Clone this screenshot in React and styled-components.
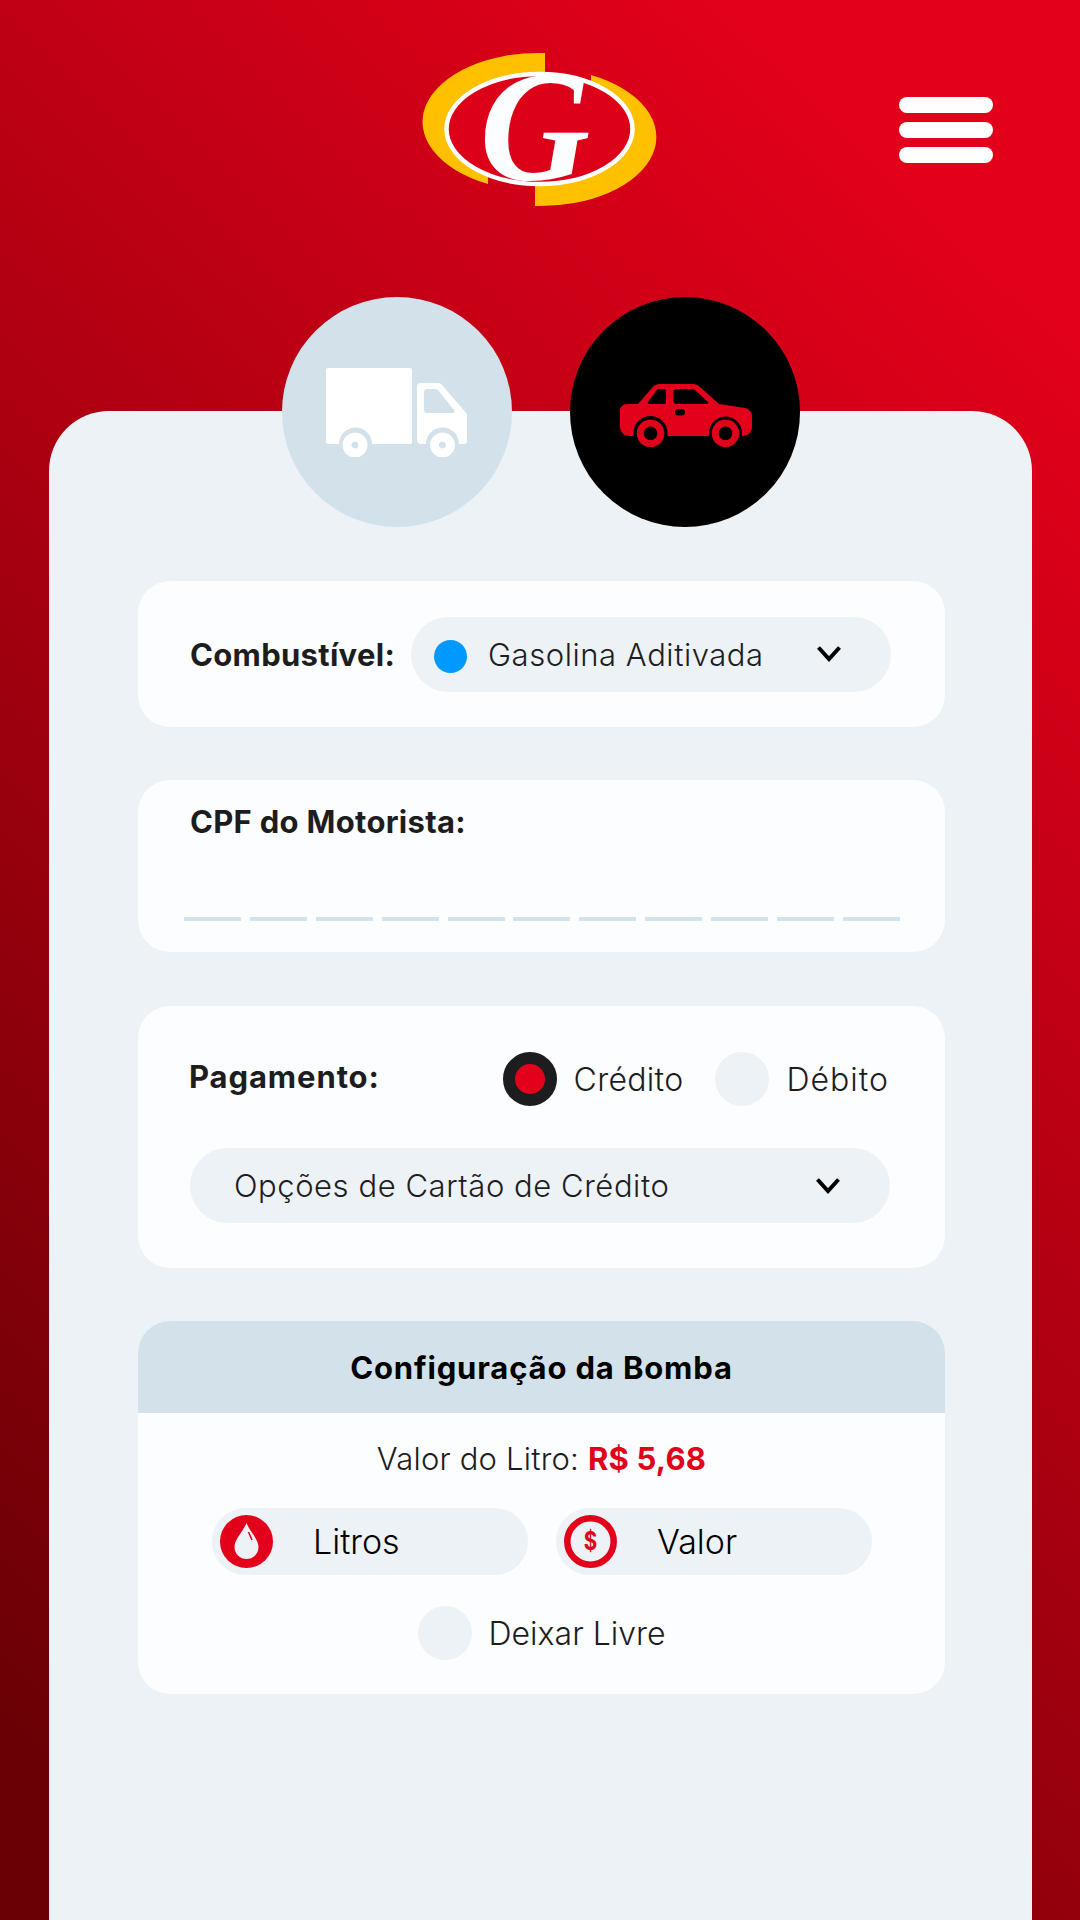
import React from "react";
import styled, { createGlobalStyle } from "styled-components";

const Global = createGlobalStyle`
  html, body { margin: 0; padding: 0; }
  body { font-family: Inter, "Open Sans", "Liberation Sans", sans-serif; }
`;

const Page = styled.div`
  width: 1080px;
  height: 1920px;
  overflow: hidden;
  display: flex;
  flex-direction: column;
  background: linear-gradient(44deg, #6a0005 7%, #e2001a 88%);
`;

const Header = styled.header`
  height: 411px;
  flex: none;
  display: grid;
  grid-template-columns: 1fr auto 1fr;
  align-items: start;
`;

const Logo = styled.svg`
  grid-column: 2;
  width: 232px;
  height: 153px;
  margin-top: 53px;
  display: block;
  overflow: visible;
`;

const Menu = styled.div`
  grid-column: 3;
  justify-self: end;
  margin: 97px 87px 0 0;
  display: flex;
  flex-direction: column;
  gap: 9px;
`;

const MenuBar = styled.span`
  display: block;
  width: 94px;
  height: 16px;
  border-radius: 8px;
  background: #ffffff;
`;

const Panel = styled.main`
  flex: 1;
  margin: 0 48px 0 49px;
  padding: 0 87px 0 89px;
  background: #ecf2f5;
  border-radius: 60px 60px 0 0;
`;

const Tabs = styled.div`
  margin: -114px 0 0 -1px;
  display: flex;
  justify-content: center;
  gap: 58px;
`;

const Tab = styled.div`
  width: 230px;
  height: 230px;
  border-radius: 50%;
  background: ${(p) => (p.$active ? "#000000" : "#d3e2ea")};
  display: flex;
  align-items: center;
  justify-content: center;
`;

const Stack = styled.div`
  margin-top: 54px;
  display: flex;
  flex-direction: column;
  gap: 53px;
`;

const Card = styled.section`
  background: #fbfdfe;
  border-radius: 32px;
  height: ${(p) => p.$h}px;
  box-sizing: border-box;
  overflow: hidden;
`;

const FuelRow = styled.div`
  height: 100%;
  display: flex;
  align-items: center;
  padding: 0 54px 0 52px;
  justify-content: space-between;
`;

const Label = styled.span`
  font-size: 31px;
  font-weight: 700;
  color: #1d1d1f;
  letter-spacing: 0.3px;
`;

const Select = styled.div`
  height: 75px;
  border-radius: 38px;
  background: #ecf2f5;
  display: flex;
  align-items: center;
  box-sizing: border-box;
  width: ${(p) => p.$w}px;
  padding: 0 49px 0 ${(p) => p.$pl}px;
`;

const Dot = styled.span`
  width: 33px;
  height: 33px;
  border-radius: 50%;
  background: #0099ff;
  flex: none;
  margin: 4px 21px 0 0;
`;

const SelectText = styled.span`
  flex: 1;
  font-size: 31px;
  font-weight: 300;
  color: #1d1d1f;
  letter-spacing: 0.55px;
`;

const CpfCard = styled(Card)`
  padding: 23px 45px 0 46px;
  margin-bottom: 1px;
`;

const CpfLabel = styled(Label)`
  display: block;
  padding-left: 6px;
`;

const Dashes = styled.div`
  margin-top: 77px;
  display: flex;
  justify-content: space-between;
`;

const Dash = styled.span`
  width: 57px;
  height: 4px;
  background: #d0e3ee;
`;

const PayRow = styled.div`
  display: flex;
  align-items: center;
  padding: 46px 56px 0 51px;
`;

const PayLabel = styled(Label)`
  flex: 1;
  letter-spacing: 0.9px;
  margin-bottom: 6px;
`;

const Radio = styled.span`
  width: 54px;
  height: 54px;
  border-radius: 50%;
  flex: none;
  box-sizing: border-box;
  background: ${(p) => (p.$on ? "#e2001a" : "#ecf2f5")};
  border: ${(p) => (p.$on ? "12px solid #1d1d1f" : "none")};
`;

const RadioText = styled.span`
  margin-left: 17px;
  margin-right: ${(p) => p.$mr || 0}px;
  font-size: 32px;
  font-weight: 300;
  color: #1d1d1f;
  letter-spacing: 0.3px;
`;

const DebitText = styled(RadioText)`
  letter-spacing: 1px;
`;

const FreeText = styled(RadioText)`
  letter-spacing: 0;
`;

const PaySelect = styled(Select)`
  margin: 42px 0 0 52px;
`;

const BombaHead = styled.h2`
  margin: 0;
  height: 92px;
  background: #d3e2ea;
  display: flex;
  align-items: center;
  justify-content: center;
  font-size: 31px;
  font-weight: 700;
  letter-spacing: 0.85px;
  color: #000;
`;

const Price = styled.p`
  margin: 25px 0 0;
  text-align: center;
  font-size: 31px;
  line-height: 42px;
  font-weight: 300;
  letter-spacing: 0.2px;
  color: #1d1d1f;
  b { color: #e2001a; font-weight: 700; }
`;

const Pills = styled.div`
  margin-top: 28px;
  padding: 0 73px 0 74px;
  display: flex;
  justify-content: space-between;
`;

const Pill = styled.div`
  width: 316px;
  height: 67px;
  border-radius: 34px;
  background: #ecf2f5;
  display: flex;
  align-items: center;
  padding-left: 8px;
  box-sizing: border-box;
`;

const PillIcon = styled.svg`
  width: 53px;
  height: 53px;
  flex: none;
`;

const PillText = styled.span`
  margin-left: 40px;
  font-size: 34px;
  font-weight: 300;
  color: #000;
`;

const FreeRow = styled.div`
  margin-top: 31px;
  display: flex;
  justify-content: center;
  align-items: center;
`;

const Chevron = () => (
  <svg width="26" height="18" viewBox="0 0 26 18" style={{ flex: "none" }}>
    <path d="M2.500 2.500 L13 14 L23.500 2.500" fill="none" stroke="#000" strokeWidth="4" />
  </svg>
);

const Truck = () => (
  <svg width="142" height="90" viewBox="326 367 142 90">
    <path fill="#fff" d="M328 368h82a2 2 0 0 1 2 2v72a2 2 0 0 1-2 2h-38a16.500 16.500 0 0 0-33 0h-9a4 2 0 0 1-4-2v-72a2 2 0 0 1 2-2z" />
    <path fill="#fff" fillRule="evenodd" d="M421 383h17c2 0 3 1 4 2l25 29v27a3 3 0 0 1-3 3h-5a16.500 16.500 0 0 0-33 0h-5a4 4 0 0 1-4-3v-54a4 4 0 0 1 4-4zm6 6a3 3 0 0 0-3 3v18a3 3 0 0 0 3 3h25a2 2 0 0 0 2-3l-16-20c-1-1-2-1-3-1z" />
    <path fill="#fff" fillRule="evenodd" d="M355 432.500a12.500 12.500 0 1 0 .01 0zm0 9a3.500 3.500 0 1 1-.01 0z" />
    <path fill="#fff" fillRule="evenodd" d="M442.500 432.500a12.500 12.500 0 1 0 .01 0zm0 9a3.500 3.500 0 1 1-.01 0z" />
  </svg>
);

const Car = () => (
  <svg width="138" height="72" viewBox="616 376 138 72">
    <path
      fill="#e2001a"
      fillRule="evenodd"
      d="M627 404L638 404L652 388C654 385 657 384 660 384L693 384C696 384 698 385 700 387L719 404L745 408C749 409 752 412 752 416L752 427C752 432 748 436 742 436L742 433A16.500 16.500 0 0 0 709 433L709 436L667.500 436L667.500 433A17 17 0 0 0 633.500 433L633.500 436L630 436C624 436 620 432 620 426L620 411C620 407 623 404 627 404Z
      M658 389L663.500 389C665 389 666 390 666 391L666 402.500C666 403.500 665 404 664 404L649 404C648 404 647.500 403 648 402L656 391C656.500 390 657 389 658 389Z
      M676 389L692 389C693 389 694 389.500 695 390L708 402C708.500 403 708 404 707 404L676 404C674.500 404 673.500 403 673.500 401.500L673.500 391.500C673.500 390 674.500 389 676 389Z
      M678 409L682 409C684 409 685 410.500 685 412.250C685 414 684 415.500 682 415.500L678 415.500C676 415.500 675 414 675 412.250C675 410.500 676 409 678 409Z"
    />
    <path fill="#e2001a" fillRule="evenodd" d="M650.500 419.500a13.800 13.800 0 1 0 .01 0zm0 7a6.800 6.800 0 1 1-.01 0z" />
    <path fill="#e2001a" fillRule="evenodd" d="M725.500 419.500a13.800 13.800 0 1 0 .01 0zm0 7a6.800 6.800 0 1 1-.01 0z" />
  </svg>
);

const Drop = () => (
  <PillIcon viewBox="0 0 53 53">
    <circle cx="26.500" cy="26.500" r="26.500" fill="#e2001a" />
    <path fill="#ecf2f5" d="M26.500 8C30 17 38.500 24 38.500 32A12 12 0 0 1 14.500 32C14.500 24 23 17 26.500 8Z" />
    <path fill="none" stroke="#e2001a" strokeWidth="1.500" d="M28.500 17l3.500 8" />
  </PillIcon>
);

const Dollar = () => (
  <PillIcon viewBox="0 0 53 53">
    <circle cx="26.500" cy="26.500" r="23.200" fill="#ecf2f5" stroke="#e2001a" strokeWidth="6.500" />
    <text transform="translate(26.500 35) scale(.82 1)" textAnchor="middle" fontFamily="Inter, sans-serif" fontWeight="700" fontSize="25" fill="#e2001a">$</text>
  </PillIcon>
);

export default function App() {
  return (
    <Page>
      <Global />
      <Header>
        <Logo viewBox="424 53 232 153" role="img" aria-label="G">
          <path fill="#ffc000" d="M545 53A116 69 0 0 0 488 184L488 170L545 72Z" />
          <path fill="#ffc000" d="M591 75A116 69 0 0 1 535 206L535 180L591 90Z" />
          <ellipse cx="539.500" cy="129" rx="93" ry="55" fill="#dc0019" stroke="#fff" strokeWidth="4.500" />
          <text transform="translate(535 179) scale(.98 1)" textAnchor="middle" fontFamily="Liberation Serif, serif" fontWeight="700" fontStyle="italic" fontSize="156" fill="#fbfdfe">G</text>
        </Logo>
        <Menu>
          <MenuBar />
          <MenuBar />
          <MenuBar />
        </Menu>
      </Header>
      <Panel>
        <Tabs>
          <Tab><Truck /></Tab>
          <Tab $active><Car /></Tab>
        </Tabs>
        <Stack>
          <Card $h={146}>
            <FuelRow>
              <Label>Combustível:</Label>
              <Select $w={480} $pl={23}>
                <Dot />
                <SelectText>Gasolina Aditivada</SelectText>
                <Chevron />
              </Select>
            </FuelRow>
          </Card>
          <CpfCard $h={172}>
            <CpfLabel>CPF do Motorista:</CpfLabel>
            <Dashes>
              {Array.from({ length: 11 }, (_, i) => <Dash key={i} />)}
            </Dashes>
          </CpfCard>
          <Card $h={262}>
            <PayRow>
              <PayLabel>Pagamento:</PayLabel>
              <Radio $on />
              <RadioText $mr={32}>Crédito</RadioText>
              <Radio />
              <DebitText>Débito</DebitText>
            </PayRow>
            <PaySelect $w={700} $pl={44}>
              <SelectText>Opções de Cartão de Crédito</SelectText>
              <Chevron />
            </PaySelect>
          </Card>
          <Card $h={373}>
            <BombaHead>Configuração da Bomba</BombaHead>
            <Price>Valor do Litro: <b>R$ 5,68</b></Price>
            <Pills>
              <Pill><Drop /><PillText>Litros</PillText></Pill>
              <Pill><Dollar /><PillText>Valor</PillText></Pill>
            </Pills>
            <FreeRow>
              <Radio />
              <FreeText>Deixar Livre</FreeText>
            </FreeRow>
          </Card>
        </Stack>
      </Panel>
    </Page>
  );
}
